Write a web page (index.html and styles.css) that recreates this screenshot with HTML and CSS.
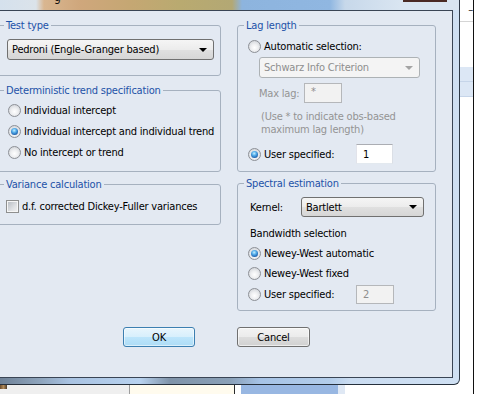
FILE: index.html
```html
<!DOCTYPE html>
<html lang="en">
<head>
    <meta charset="utf-8">
    <title>Cointegration Test Specification</title>
    <link rel="stylesheet" href="styles.css">
</head>
<body>
    <div class="screen">
        <div class="desk-left">
            <div class="dialog">
                <div class="titlebar">
                    <span class="title-tail">g</span>
                    <span class="close-btn"></span>
                </div>
                <div class="dialog-mid">
                    <div class="client">
                        <div class="columns">
                            <div class="col col-left">
                                <fieldset class="group">
                                    <legend>Test type</legend>
                                    <div class="group-body body-test">
                                        <div class="combo combo-test">
                                            <span class="combo-text">Pedroni (Engle-Granger based)</span>
                                            <span class="arrow"></span>
                                        </div>
                                    </div>
                                </fieldset>

                                <fieldset class="group group-trend">
                                    <legend>Deterministic trend specification</legend>
                                    <div class="group-body body-trend">
                                        <div class="opt"><span class="radio"></span><span>Individual intercept</span></div>
                                        <div class="opt"><span class="radio on"></span><span>Individual intercept and individual trend</span></div>
                                        <div class="opt"><span class="radio"></span><span>No intercept or trend</span></div>
                                    </div>
                                </fieldset>

                                <fieldset class="group group-var">
                                    <legend>Variance calculation</legend>
                                    <div class="group-body body-var">
                                        <div class="opt"><span class="check"></span><span>d.f. corrected Dickey-Fuller variances</span></div>
                                    </div>
                                </fieldset>
                            </div>

                            <div class="col col-right">
                                <fieldset class="group">
                                    <legend>Lag length</legend>
                                    <div class="group-body body-lag">
                                        <div class="opt"><span class="radio"></span><span>Automatic selection:</span></div>
                                        <div class="combo combo-crit disabled">
                                            <span class="combo-text">Schwarz Info Criterion</span>
                                            <span class="arrow"></span>
                                        </div>
                                        <div class="field-row maxlag">
                                            <span class="field-label muted">Max lag:</span>
                                            <span class="textbox disabled">*</span>
                                        </div>
                                        <div class="note muted">(Use * to indicate obs-based<br>maximum lag length)</div>
                                        <div class="opt user-row">
                                            <span class="radio on"></span>
                                            <span class="user-label">User specified:</span>
                                            <span class="textbox">1</span>
                                        </div>
                                    </div>
                                </fieldset>

                                <fieldset class="group group-spec">
                                    <legend>Spectral estimation</legend>
                                    <div class="group-body body-spec">
                                        <div class="field-row kernel">
                                            <span class="kernel-label">Kernel:</span>
                                            <div class="combo combo-kernel">
                                                <span class="combo-text">Bartlett</span>
                                                <span class="arrow"></span>
                                            </div>
                                        </div>
                                        <div class="bw-title">Bandwidth selection</div>
                                        <div class="opt opt-bw first"><span class="radio on"></span><span>Newey-West automatic</span></div>
                                        <div class="opt opt-bw"><span class="radio"></span><span>Newey-West fixed</span></div>
                                        <div class="opt opt-bw last">
                                            <span class="radio"></span>
                                            <span class="user-label">User specified:</span>
                                            <span class="textbox disabled">2</span>
                                        </div>
                                    </div>
                                </fieldset>
                            </div>
                        </div>

                        <div class="buttons">
                            <button class="btn btn-ok">OK</button>
                            <button class="btn btn-cancel">Cancel</button>
                        </div>
                    </div>
                </div>
            </div>
            <div class="taskstrip">
                <span class="seg seg-a"><span class="tiny-icon"></span></span>
                <span class="seg seg-b"></span>
                <span class="seg seg-c"></span>
                <span class="seg seg-d"></span>
                <span class="seg seg-e"></span>
            </div>
        </div>

        <div class="bgwin">
            <div class="bgwin-body">
                <div class="bgwin-head">&ndash;</div>
                <div class="bgwin-gap"></div>
                <div class="bgwin-band"></div>
                <div class="bgwin-band"></div>
            </div>
            <div class="bgwin-edge"></div>
        </div>
    </div>
</body>
</html>
```

FILE: styles.css
```css
body {
    margin: 0;
    padding: 0;
    font-family: "DejaVu Sans Condensed", "Liberation Sans", sans-serif;
    font-size: 11px;
    letter-spacing: -0.2px;
    color: #000;
}

.screen {
    display: flex;
    width: 477px;
    height: 394px;
    overflow: hidden;
    background-color: #fff;
}

.desk-left {
    display: flex;
    flex-direction: column;
    width: 460px;
    flex: none;
}

/* dialog window with aero frame */
.dialog {
    display: flex;
    flex-direction: column;
    height: 385px;
    box-sizing: border-box;
    border-right: 1px solid #2f3b49;
    border-bottom: 1px solid #26303c;
    border-bottom-right-radius: 6px;
    overflow: hidden;
    background: linear-gradient(to right, #6e8197 0, #8ea4bc 40px, #a9c3e2 70px, #b8d2ef 140px, #7f93a9 170px, #8aa0b7 230px, #a6c3e6 260px, #b3cdea 330px, #cadcf1 350px, #cfe0f3 100%);
}

.titlebar {
    display: flex;
    height: 10px;
    flex: none;
    overflow: hidden;
    background: linear-gradient(to right, #d5e1ed 0, #dbe3ea 36px, #d9b690 44px, #cfa77c 80px, #c5a773 130px, #b9aa70 180px, #b3a874 232px, #8db4de 242px, #90b7e1 330px, #c7d8ea 345px, #d9e5f1 400px, #d9e5f1 100%);
}

.title-tail {
    display: block;
    margin: -9px 0 0 54px;
    font-size: 12px;
    line-height: 12px;
    color: #111;
}

.close-btn {
    display: block;
    width: 44px;
    height: 2px;
    margin-left: 342px;
    background-color: #4a2a24;
}

.dialog-mid {
    display: flex;
    flex: 1;
    padding-right: 6px;
    padding-bottom: 6px;
}

.client {
    width: 453px;
    box-sizing: border-box;
    border-top: 1px solid #3a4555;
    border-right: 1px solid #3a4555;
    border-bottom: 1px solid #3a4555;
    background-color: #e3e9f2;
    padding-top: 8px;
    overflow: hidden;
}

.columns {
    display: flex;
    height: 292px;
}

.col {
    display: flex;
    flex-direction: column;
}

.col-left {
    width: 224px;
    margin-left: -3px;
}

.col-right {
    width: 199px;
    margin-left: 16px;
}

/* group boxes */
.group {
    margin: 0;
    padding: 0;
    min-width: 0;
    border: 1px solid #a6b1bf;
    border-radius: 3px;
}

.group legend {
    margin-left: 6px;
    padding: 0 2px;
    line-height: 13px;
    color: #1d52a8;
}

.group-trend {
    margin-top: 8px;
}

.group-var {
    margin-top: 6px;
}

.group-spec {
    margin-top: 5px;
}

.body-test {
    padding: 7px 6px 15px 9px;
}

.body-trend {
    padding: 3px 0 8px 10px;
}

.body-var {
    padding: 5px 0 7px 8px;
}

.body-lag {
    padding: 4px 0 7px 10px;
}

.body-spec {
    padding: 7px 0 5px 10px;
}

.opt {
    display: flex;
    align-items: center;
    height: 21px;
    gap: 3px;
    white-space: nowrap;
}

.opt-bw {
    height: 20px;
}

.opt-bw.first {
    margin-top: 3px;
}

.opt-bw.last {
    height: 21px;
    margin-top: 1px;
}

.muted {
    color: #949494;
}

/* radio and check */
.radio {
    display: flex;
    align-items: center;
    justify-content: center;
    flex: none;
    width: 13px;
    height: 13px;
    box-sizing: border-box;
    border: 1px solid #8d9096;
    border-radius: 50%;
    background: radial-gradient(circle at 50% 60%, #ffffff 0, #eeeff1 40%, #c6cad0 100%);
}

.radio.on::after {
    content: "";
    width: 7px;
    height: 7px;
    border-radius: 50%;
    background: radial-gradient(circle at 45% 35%, #c8f0ff 0, #55aeea 35%, #1d5eab 75%, #163e77 100%);
}

.check {
    flex: none;
    width: 13px;
    height: 13px;
    box-sizing: border-box;
    border: 1px solid #8e8f8f;
    background: linear-gradient(135deg, #b3b8bf 0, #dfe1e4 60%, #f2f2f3 100%);
    box-shadow: inset 0 0 0 1px #f6f6f6;
}

/* combo boxes */
.combo {
    display: flex;
    align-items: center;
    justify-content: space-between;
    box-sizing: border-box;
    border: 1px solid #707070;
    border-radius: 3px;
    background: linear-gradient(#f5f5f5, #ececec 50%, #e0e0e0 50%, #d6d6d6);
    padding: 0 6px 0 4px;
}

.combo .arrow {
    width: 0;
    height: 0;
    border-left: 4px solid transparent;
    border-right: 4px solid transparent;
    border-top: 4px solid #000;
}

.combo.disabled {
    border-color: #adb2b5;
    background: #f4f4f4;
    color: #8e8e8e;
}

.combo.disabled .arrow {
    border-top-color: #a4a4a4;
}

.combo-test {
    width: 207px;
    height: 21px;
}

.combo-crit {
    width: 161px;
    height: 21px;
    margin-left: 11px;
}

.combo-kernel {
    width: 123px;
    height: 20px;
}

/* text fields */
.field-row {
    display: flex;
    align-items: center;
}

.textbox {
    display: flex;
    align-items: center;
    box-sizing: border-box;
    height: 20px;
    padding-left: 6px;
    background-color: #fff;
    border: 1px solid;
    border-color: #abadb3 #dbdfe6 #e3e9ef #e2e3ea;
}

.textbox.disabled {
    background-color: #f2f2f2;
    border-color: #b5b7ba;
    color: #8e8e8e;
}

.maxlag {
    height: 20px;
    margin-top: 5px;
    margin-left: 11px;
}

.maxlag .field-label {
    width: 45px;
}

.maxlag .textbox {
    width: 38px;
    align-items: flex-start;
    padding-top: 1px;
}

.note {
    margin-top: 7px;
    margin-left: 13px;
    line-height: 13px;
}

.user-row {
    height: 20px;
    margin-top: 8px;
}

.user-label {
    width: 89px;
}

.user-row .textbox {
    width: 37px;
}

.opt-bw .textbox {
    width: 38px;
    height: 19px;
}

.kernel {
    height: 20px;
    margin-left: 2px;
}

.kernel-label {
    width: 51px;
}

.bw-title {
    margin-top: 10px;
    margin-left: 2px;
    line-height: 13px;
}

/* buttons */
.buttons {
    display: flex;
    gap: 42px;
    margin-top: 16px;
    padding-left: 123px;
}

.btn {
    height: 20px;
    padding: 0;
    font-family: inherit;
    font-size: 11px;
    letter-spacing: inherit;
    color: #000;
    border-radius: 3px;
    border: 1px solid #707070;
}

.btn-ok {
    width: 72px;
    border-color: #3c7fb1;
    background: linear-gradient(#e8f5fd, #d7effc 50%, #bde5fb 50%, #addcf6);
    box-shadow: inset 0 0 0 1px rgba(255, 255, 255, 0.55);
}

.btn-cancel {
    width: 73px;
    background: linear-gradient(#f3f3f3, #ebebeb 50%, #dddddd 50%, #d1d1d1);
    box-shadow: inset 0 0 0 1px rgba(255, 255, 255, 0.6);
}

/* desktop behind the dialog */
.taskstrip {
    display: flex;
    height: 9px;
    flex: none;
    background-color: #fff;
}

.seg {
    display: block;
    height: 100%;
    flex: none;
}

.seg-a {
    width: 129px;
    background-color: #efefef;
    border-right: 1px solid #9d9d9d;
}

.tiny-icon {
    display: block;
    width: 7px;
    height: 4px;
    background: linear-gradient(to right, #6b4a2a, #b08a5a, #4e3a26);
}

.seg-b {
    width: 104px;
    background-color: #fffbee;
    border-right: 1px solid #2a2a2a;
}

.seg-c {
    width: 6px;
}

.seg-d {
    width: 97px;
    background-color: #98b7e2;
}

.seg-e {
    width: 7px;
    background-color: #dfe8f4;
}

.bgwin {
    display: flex;
    flex: 1;
    background-color: #fff;
}

.bgwin-body {
    display: flex;
    flex-direction: column;
    width: 13px;
}

.bgwin-head {
    height: 22px;
    box-sizing: border-box;
    border-bottom: 1px solid #d5d5d5;
    text-align: right;
    line-height: 20px;
    color: #222;
}

.bgwin-gap {
    height: 45px;
}

.bgwin-band {
    height: 15px;
    box-sizing: border-box;
    background-color: #dce7f5;
    border-bottom: 1px solid #c6d5e9;
}

.bgwin-edge {
    width: 1px;
    background-color: #111;
}
```
